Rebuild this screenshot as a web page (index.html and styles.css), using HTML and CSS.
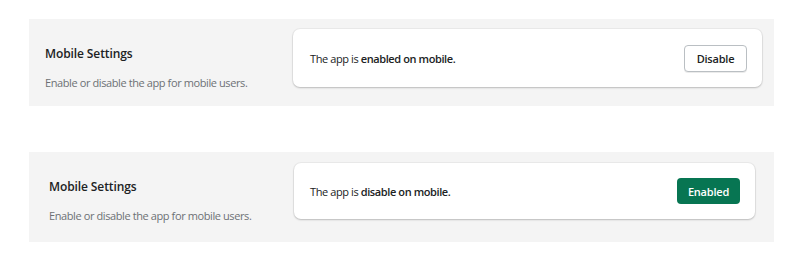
FILE: index.html
```html
<!DOCTYPE html>
<html lang="en">
<head>
  <meta charset="UTF-8" />
  <title>Mobile Settings</title>
  <link rel="stylesheet" href="styles.css">
</head>
<body>
  <div class="page">
    <section class="setting setting-on">
      <div class="setting-info">
        <h2 class="setting-title">Mobile Settings</h2>
        <p class="setting-desc">Enable or disable the app for mobile users.</p>
      </div>
      <div class="setting-card">
        <span class="status">The app is <strong>enabled on mobile.</strong></span>
        <button class="btn btn-plain">Disable</button>
      </div>
    </section>

    <section class="setting setting-off">
      <div class="setting-info">
        <h2 class="setting-title">Mobile Settings</h2>
        <p class="setting-desc">Enable or disable the app for mobile users.</p>
      </div>
      <div class="setting-card">
        <span class="status">The app is <strong>disable on mobile.</strong></span>
        <button class="btn btn-primary">Enabled</button>
      </div>
    </section>
  </div>
</body>
</html>
```

FILE: styles.css
```css
* { box-sizing: border-box; }
body {
  margin: 0;
  background: #fff;
  font-family: 'Open Sans', sans-serif;
  color: #202223;
}
.page {
  padding: 19px 26px 0 29px;
}
.setting {
  display: flex;
  align-items: flex-start;
  background: #f4f4f4;
}
.setting-on {
  padding: 10px 12px 0 16px;
}
.setting-off {
  margin-top: 46px;
  padding: 11px 19px 0 20px;
}
.setting-info {
  flex-shrink: 0;
  width: 248px;
  padding-top: 16px;
}
.setting-off .setting-info {
  width: 245px;
  padding-top: 15px;
}
.setting-title {
  margin: 0;
  font-size: 12px;
  font-weight: 600;
  line-height: 18px;
  letter-spacing: -0.1px;
}
.setting-desc {
  margin: 12px 0 0;
  font-size: 11px;
  line-height: 16px;
  letter-spacing: -0.4px;
  color: #6d7175;
}
.setting-card {
  flex: 1;
  display: flex;
  justify-content: space-between;
  align-items: center;
  height: 58px;
  margin-bottom: 19px;
  padding: 0 15px 0 17px;
  background: #fff;
  border-radius: 7px;
  box-shadow: 0 0 0 1px rgba(0, 0, 0, 0.04), 0 1px 2px rgba(0, 0, 0, 0.2);
}
.setting-off .setting-card {
  height: 56px;
  margin-bottom: 23px;
  padding-left: 16px;
}
.status {
  font-size: 11px;
  letter-spacing: -0.4px;
}
.status strong {
  font-weight: 600;
}
.btn {
  width: 63px;
  height: 27px;
  font-family: inherit;
  font-size: 11px;
  font-weight: 600;
  letter-spacing: -0.2px;
  border-radius: 4px;
  cursor: pointer;
}
.btn-plain {
  background: #fff;
  color: #202223;
  border: 1px solid #babfc3;
  box-shadow: 0 1px 0 rgba(0, 0, 0, 0.08);
}
.btn-primary {
  height: 26px;
  background: #077552;
  color: #fff;
  border: none;
}
```
